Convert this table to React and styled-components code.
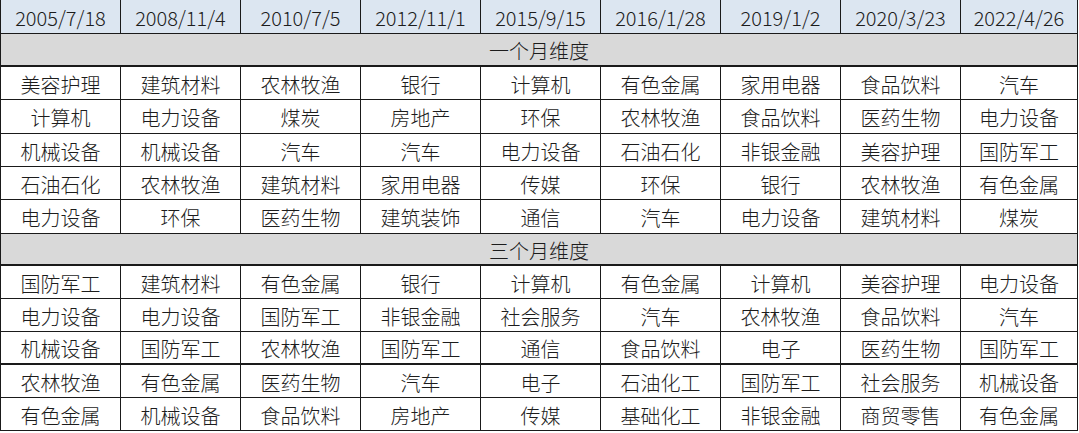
import React from 'react';
import styled, { createGlobalStyle } from 'styled-components';

const GlobalStyle = createGlobalStyle`
  html, body {
    margin: 0;
    padding: 0;
    background: #ffffff;
  }
  body {
    font-family: "Noto Sans CJK SC", "Noto Sans", sans-serif;
  }
`;

const Table = styled.div`
  display: grid;
  grid-template-columns: repeat(8, 120px) 117px;
  width: 1077px;
  border-left: 1px solid #1a1a1a;
  box-sizing: content-box;
`;

const Cell = styled.div`
  box-sizing: border-box;
  height: ${p => p.h}px;
  display: flex;
  align-items: center;
  justify-content: center;
  padding-top: 2px;
  font-size: 20px;
  font-weight: 300;
  color: #1c1c1c;
  white-space: nowrap;
  border-right: 1px solid #1a1a1a;
  border-bottom: ${p => (p.thick ? 2 : 1)}px solid #1a1a1a;
  background: ${p => (p.head ? '#dce6f1' : '#ffffff')};
`;

const Section = styled.div`
  grid-column: 1 / -1;
  box-sizing: border-box;
  height: ${p => p.h}px;
  display: flex;
  align-items: center;
  justify-content: center;
  padding-top: 2px;
  font-size: 20px;
  font-weight: 300;
  color: #1c1c1c;
  background: #d9d9d9;
  border-right: 1px solid #1a1a1a;
  border-bottom: 2px solid #1a1a1a;
`;

const dates = ['2005/7/18', '2008/11/4', '2010/7/5', '2012/11/1', '2015/9/15', '2016/1/28', '2019/1/2', '2020/3/23', '2022/4/26'];

const month1 = [
  ['美容护理', '建筑材料', '农林牧渔', '银行', '计算机', '有色金属', '家用电器', '食品饮料', '汽车'],
  ['计算机', '电力设备', '煤炭', '房地产', '环保', '农林牧渔', '食品饮料', '医药生物', '电力设备'],
  ['机械设备', '机械设备', '汽车', '汽车', '电力设备', '石油石化', '非银金融', '美容护理', '国防军工'],
  ['石油石化', '农林牧渔', '建筑材料', '家用电器', '传媒', '环保', '银行', '农林牧渔', '有色金属'],
  ['电力设备', '环保', '医药生物', '建筑装饰', '通信', '汽车', '电力设备', '建筑材料', '煤炭'],
];

const month3 = [
  ['国防军工', '建筑材料', '有色金属', '银行', '计算机', '有色金属', '计算机', '美容护理', '电力设备'],
  ['电力设备', '电力设备', '国防军工', '非银金融', '社会服务', '汽车', '农林牧渔', '食品饮料', '汽车'],
  ['机械设备', '国防军工', '农林牧渔', '国防军工', '通信', '食品饮料', '电子', '医药生物', '国防军工'],
  ['农林牧渔', '有色金属', '医药生物', '汽车', '电子', '石油化工', '国防军工', '社会服务', '机械设备'],
  ['有色金属', '机械设备', '食品饮料', '房地产', '传媒', '基础化工', '非银金融', '商贸零售', '有色金属'],
];

const heights1 = [33, 34, 33, 33, 34];
const heights3 = [33, 33, 33, 33, 33];

const Rows = ({ rows, heights, thickAt }) =>
  rows.map((row, r) =>
    row.map((name, c) => (
      <Cell key={`${r}-${c}`} h={heights[r]} thick={r === thickAt}>
        {name}
      </Cell>
    ))
  );

export default function App() {
  return (
    <>
      <GlobalStyle />
      <Table>
        {dates.map(d => (
          <Cell key={d} head h={34}>{d}</Cell>
        ))}
        <Section h={33}>一个月维度</Section>
        <Rows rows={month1} heights={heights1} />
        <Section h={32}>三个月维度</Section>
        <Rows rows={month3} heights={heights3} thickAt={2} />
      </Table>
    </>
  );
}
